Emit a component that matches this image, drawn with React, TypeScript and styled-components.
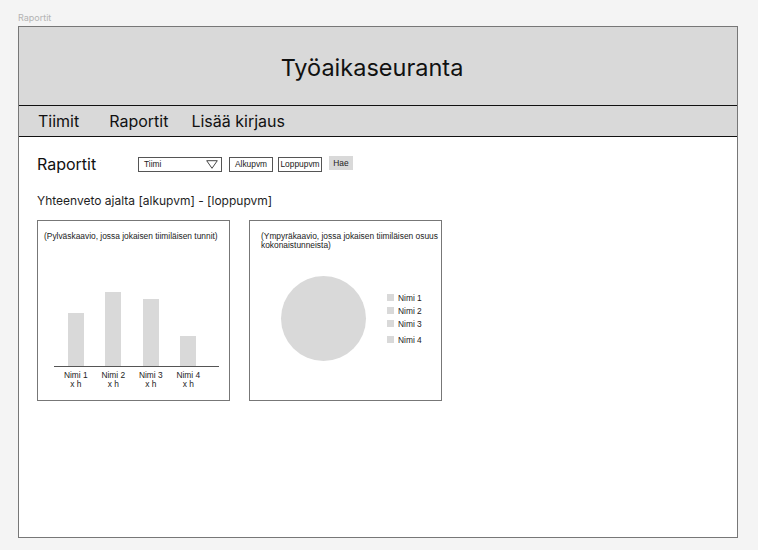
import styled, { createGlobalStyle } from "styled-components";

const GlobalStyle = createGlobalStyle`
  body {
    margin: 0;
    background: #f4f4f4;
    font-family: Inter, "Liberation Sans", sans-serif;
    color: #1e1e1e;
  }
`;

const bars = [
  { name: "Nimi 1", h: 53 },
  { name: "Nimi 2", h: 74 },
  { name: "Nimi 3", h: 67 },
  { name: "Nimi 4", h: 30 },
];

const legend = ["Nimi 1", "Nimi 2", "Nimi 3", "Nimi 4"];

export default function App() {
  return (
    <>
      <GlobalStyle />
      <Page>
        <PageLabel>Raportit</PageLabel>
        <Frame>
          <Header>
            <Title>Työaikaseuranta</Title>
          </Header>
          <Nav>
            <NavItem>Tiimit</NavItem>
            <NavItem>Raportit</NavItem>
            <NavItem>Lisää kirjaus</NavItem>
          </Nav>
          <Content>
            <Toolbar>
              <Heading>Raportit</Heading>
              <Select>
                <span>Tiimi</span>
                <svg width="12" height="9" viewBox="0 0 12 9">
                  <path d="M0.7 0.7 H11.3 L6 8.3 Z" fill="none" stroke="#333" strokeWidth="0.9" />
                </svg>
              </Select>
              <DateBox $w={44} $mr={5}>Alkupvm</DateBox>
              <DateBox $w={44} $mr={7}>Loppupvm</DateBox>
              <SearchButton>Hae</SearchButton>
            </Toolbar>
            <Summary>Yhteenveto ajalta [alkupvm] - [loppupvm]</Summary>
            <Cards>
              <Card>
                <CardTitle>(Pylväskaavio, jossa jokaisen tiimiläisen tunnit)</CardTitle>
                <BarArea>
                  {bars.map((b) => (
                    <BarSlot key={b.name}>
                      <Bar $h={b.h} />
                    </BarSlot>
                  ))}
                </BarArea>
                <BarLabels>
                  {bars.map((b) => (
                    <BarLabel key={b.name}>
                      {b.name}
                      <br />x h
                    </BarLabel>
                  ))}
                </BarLabels>
              </Card>
              <Card>
                <CardTitle $pad={11}>
                  (Ympyräkaavio, jossa jokaisen tiimiläisen osuus
                  <br />
                  kokonaistunneista)
                </CardTitle>
                <PieRow>
                  <Pie />
                  <Legend>
                    {legend.map((n, i) => (
                      <LegendItem key={n} $gap={i === 3 ? 3 : 0}>
                        <Swatch />
                        {n}
                      </LegendItem>
                    ))}
                  </Legend>
                </PieRow>
              </Card>
            </Cards>
          </Content>
        </Frame>
      </Page>
    </>
  );
}

const Page = styled.div`
  padding: 12px 20px 12px 18px;
  display: flex;
  flex-direction: column;
`;

const PageLabel = styled.div`
  font-size: 9px;
  line-height: 12px;
  height: 14px;
  color: #b3b3b3;
`;

const Frame = styled.div`
  height: 510px;
  border: 1px solid #777;
  background: #fff;
  display: flex;
  flex-direction: column;
`;

const Header = styled.div`
  height: 78px;
  background: #d9d9d9;
  display: flex;
  align-items: center;
  justify-content: center;
  padding-right: 12px;
`;

const Title = styled.h1`
  margin: 0;
  font-size: 23.5px;
  font-weight: 400;
  color: #111;
  padding-top: 2px;
`;

const Nav = styled.nav`
  height: 30px;
  background: #d9d9d9;
  border-top: 1px solid #111;
  border-bottom: 1px solid #111;
  display: flex;
  align-items: center;
  padding-left: 19px;
  gap: 30px;

  & > :last-child {
    margin-left: -7px;
  }
`;

const NavItem = styled.span`
  font-size: 16px;
  color: #111;
`;

const Content = styled.div`
  padding: 18px 0 0 18px;
  display: flex;
  flex-direction: column;
`;

const Toolbar = styled.div`
  display: flex;
  align-items: center;
  height: 18px;
  font-family: "Liberation Sans", Arial, sans-serif;
`;

const Heading = styled.h2`
  margin: 0 40px 0 0;
  font-family: Inter, sans-serif;
  font-size: 16px;
  font-weight: 400;
  color: #111;
  width: 61px;
`;

const Select = styled.div`
  height: 13px;
  width: 74px;
  border: 1px solid #555;
  display: flex;
  align-items: center;
  justify-content: space-between;
  padding: 0 3px 0 5px;
  margin-right: 7px;
  font-size: 8.4px;
  color: #222;
`;

const DateBox = styled.div<{ $w: number; $mr: number }>`
  width: ${(p) => p.$w - 2}px;
  height: 13px;
  border: 1px solid #555;
  font-size: 8.4px;
  color: #222;
  display: flex;
  align-items: center;
  justify-content: center;
  margin-right: ${(p) => p.$mr}px;
`;

const SearchButton = styled.div`
  width: 24px;
  height: 14px;
  margin-top: -3px;
  background: #d9d9d9;
  font-size: 8.4px;
  color: #222;
  display: flex;
  align-items: center;
  justify-content: center;
`;

const Summary = styled.div`
  margin-top: 20px;
  font-size: 12px;
  color: #1e1e1e;
`;

const Cards = styled.div`
  display: flex;
  gap: 19px;
  margin-top: 12px;
`;

const Card = styled.div`
  width: 191px;
  height: 179px;
  border: 1px solid #777;
  display: flex;
  flex-direction: column;
  font-family: "Liberation Sans", Arial, sans-serif;
`;

const CardTitle = styled.div<{ $pad?: number }>`
  padding: 11px 0 0 ${(p) => p.$pad ?? 6}px;
  font-size: 8.4px;
  line-height: 9px;
  color: #222;
`;

const BarArea = styled.div`
  margin: auto 10px 0 16px;
  border-bottom: 1px solid #555;
  display: flex;
  align-items: flex-end;
  padding-left: 3px;
  height: 100px;
`;

const BarSlot = styled.div`
  width: 37.5px;
  display: flex;
  justify-content: center;
`;

const Bar = styled.div<{ $h: number }>`
  width: 16px;
  height: ${(p) => p.$h}px;
  background: #d9d9d9;
`;

const BarLabels = styled.div`
  display: flex;
  margin: 4px 0 11px 19px;
`;

const BarLabel = styled.div`
  width: 37.5px;
  text-align: center;
  font-size: 8.4px;
  line-height: 9px;
  color: #222;
`;

const PieRow = styled.div`
  display: flex;
  align-items: flex-start;
  margin-top: 26px;
  padding-left: 31px;
`;

const Pie = styled.div`
  width: 85px;
  height: 85px;
  border-radius: 50%;
  background: #d9d9d9;
`;

const Legend = styled.div`
  margin: 15px 0 0 21px;
  display: flex;
  flex-direction: column;
`;

const LegendItem = styled.div<{ $gap: number }>`
  display: flex;
  align-items: center;
  gap: 4px;
  height: 13px;
  margin-top: ${(p) => p.$gap}px;
  font-size: 8.4px;
  color: #222;
`;

const Swatch = styled.span`
  width: 7px;
  height: 7px;
  background: #d9d9d9;
`;
